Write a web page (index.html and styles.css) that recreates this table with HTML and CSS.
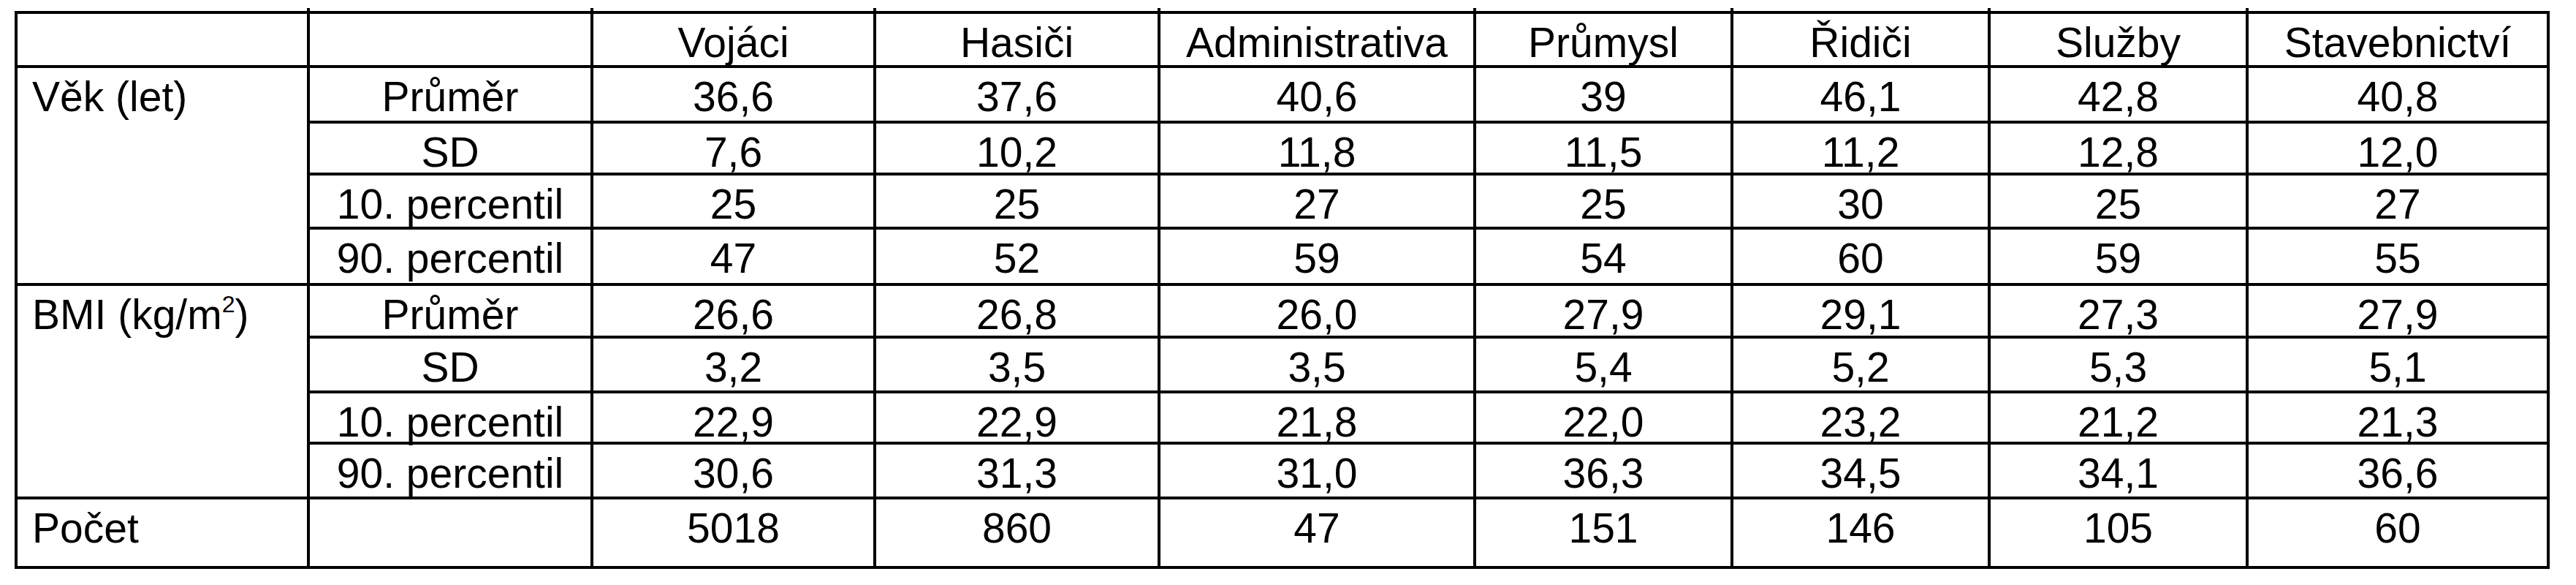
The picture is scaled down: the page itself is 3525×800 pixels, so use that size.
FILE: index.html
```html
<!DOCTYPE html>
<html lang="cs">
<head>
<meta charset="utf-8">
<title>Tabulka</title>
<link rel="stylesheet" href="styles.css">
</head>
<body>
<div class="page">
<table class="stats">
  <colgroup>
    <col class="c-label">
    <col class="c-stat">
    <col class="c-voj">
    <col class="c-has">
    <col class="c-adm">
    <col class="c-pru">
    <col class="c-rid">
    <col class="c-slu">
    <col class="c-sta">
  </colgroup>
  <thead>
    <tr class="r1">
      <th></th>
      <th class="tick"></th>
      <th class="tick">Vojáci</th>
      <th class="tick">Hasiči</th>
      <th class="tick">Administrativa</th>
      <th class="tick">Průmysl</th>
      <th class="tick">Řidiči</th>
      <th class="tick">Služby</th>
      <th class="tick">Stavebnictví</th>
    </tr>
  </thead>
  <tbody>
    <tr class="r2">
      <td class="label" rowspan="4">Věk (let)</td>
      <td>Průměr</td><td>36,6</td><td>37,6</td><td>40,6</td><td>39</td><td>46,1</td><td>42,8</td><td>40,8</td>
    </tr>
    <tr class="r3">
      <td>SD</td><td>7,6</td><td>10,2</td><td>11,8</td><td>11,5</td><td>11,2</td><td>12,8</td><td>12,0</td>
    </tr>
    <tr class="r4">
      <td>10. percentil</td><td>25</td><td>25</td><td>27</td><td>25</td><td>30</td><td>25</td><td>27</td>
    </tr>
    <tr class="r5">
      <td>90. percentil</td><td>47</td><td>52</td><td>59</td><td>54</td><td>60</td><td>59</td><td>55</td>
    </tr>
    <tr class="r6">
      <td class="label" rowspan="4">BMI (kg/m<sup>2</sup>)</td>
      <td>Průměr</td><td>26,6</td><td>26,8</td><td>26,0</td><td>27,9</td><td>29,1</td><td>27,3</td><td>27,9</td>
    </tr>
    <tr class="r7">
      <td>SD</td><td>3,2</td><td>3,5</td><td>3,5</td><td>5,4</td><td>5,2</td><td>5,3</td><td>5,1</td>
    </tr>
    <tr class="r8">
      <td>10. percentil</td><td>22,9</td><td>22,9</td><td>21,8</td><td>22,0</td><td>23,2</td><td>21,2</td><td>21,3</td>
    </tr>
    <tr class="r9">
      <td>90. percentil</td><td>30,6</td><td>31,3</td><td>31,0</td><td>36,3</td><td>34,5</td><td>34,1</td><td>36,6</td>
    </tr>
    <tr class="r10">
      <td class="label">Počet</td>
      <td></td><td>5018</td><td>860</td><td>47</td><td>151</td><td>146</td><td>105</td><td>60</td>
    </tr>
  </tbody>
</table>
</div>
</body>
</html>
```

FILE: styles.css
```css
html, body {
  margin: 0;
  padding: 0;
  background: #ffffff;
}

.page {
  padding: 15px 0 0 20px;
}

.stats {
  border-collapse: collapse;
  table-layout: fixed;
  width: 3469px;
  font-family: "Liberation Sans", Arial, sans-serif;
  font-size: 57px;
  line-height: 50px;
  color: #000;
}

.c-label { width: 400px; }
.c-stat { width: 388px; }
.c-voj { width: 387px; }
.c-has { width: 389px; }
.c-adm { width: 432px; }
.c-pru { width: 352px; }
.c-rid { width: 352px; }
.c-slu { width: 353px; }
.c-sta { width: 412px; }

.stats th,
.stats td {
  border: 4px solid #000;
  padding: 14px 4px 0 4px;
  vertical-align: top;
  text-align: center;
  font-weight: normal;
  white-space: nowrap;
}

.stats td.label {
  text-align: left;
  padding-left: 20px;
}

.stats sup {
  font-size: 32px;
  line-height: 0;
  vertical-align: 23px;
}

.r1 { height: 74px; }
.r2 { height: 76px; }
.r3 { height: 71px; }
.r4 { height: 74px; }
.r5 { height: 77px; }
.r6 { height: 72px; }
.r7 { height: 75px; }
.r8 { height: 70px; }
.r9 { height: 75px; }
.r10 { height: 95px; }

.tick {
  position: relative;
}

.tick::before {
  content: "";
  position: absolute;
  left: -4px;
  top: -8px;
  width: 4px;
  height: 9px;
  background: #000;
}
```
